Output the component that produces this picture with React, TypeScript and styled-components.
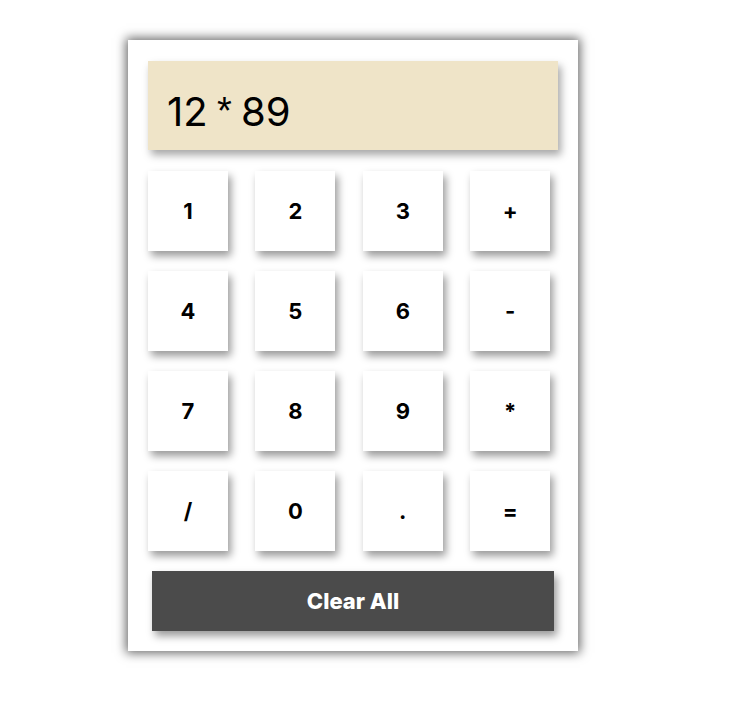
import React from "react";
import styled, { createGlobalStyle } from "styled-components";

const Global = createGlobalStyle`
  html, body { margin: 0; padding: 0; background: #ffffff; }
  body { font-family: Inter, "Noto Sans", sans-serif; }
`;

const Page = styled.div`
  padding: 40px 0 51px 128px;
  min-height: 702px;
  box-sizing: border-box;
`;

const Card = styled.div`
  width: 450px;
  box-sizing: border-box;
  padding: 21px 20px 20px 20px;
  background: #ffffff;
  box-shadow: 0 0 10px 2px rgba(0, 0, 0, 0.6);
  display: flex;
  flex-direction: column;
  height: 611px;
`;

const Display = styled.div`
  height: 89px;
  background: #efe4c8;
  box-shadow: 3px 5px 8px rgba(0, 0, 0, 0.35);
  display: flex;
  align-items: center;
  padding: 12px 0 0 19px;
  font-size: 40px;
  font-weight: 400;
  color: #000;
  box-sizing: border-box;
  white-space: pre;
  word-spacing: -2px;
`;

const Op = styled.span`
  font-family: "Liberation Sans", Arial, sans-serif;
  font-size: 38px;
`;

const Keys = styled.div`
  margin-top: 21px;
  display: grid;
  grid-template-columns: repeat(4, 80px);
  grid-auto-rows: 80px;
  column-gap: 27.4px;
  row-gap: 20px;
`;

const Key = styled.button`
  border: none;
  background: #ffffff;
  box-shadow: 3px 5px 8px rgba(0, 0, 0, 0.4);
  font-family: Inter, sans-serif;
  font-size: 22px;
  font-weight: 700;
  color: #000;
  display: flex;
  align-items: center;
  justify-content: center;
  padding: 0;
  cursor: pointer;
`;

const ClearButton = styled.button`
  margin: 20px 4px 0 4px;
  height: 60px;
  border: none;
  background: #4b4b4b;
  color: #ffffff;
  font-family: Inter, sans-serif;
  font-size: 22px;
  font-weight: 800;
  box-shadow: 3px 5px 8px rgba(0, 0, 0, 0.4);
  cursor: pointer;
`;

const keys = ["1", "2", "3", "+", "4", "5", "6", "-", "7", "8", "9", "*", "/", "0", ".", "="];

export default function App() {
  return (
    <>
      <Global />
      <Page>
        <Card>
          <Display>
            12 <Op>*</Op> 89
          </Display>
          <Keys>
            {keys.map((k) => (
              <Key key={k}>{k}</Key>
            ))}
          </Keys>
          <ClearButton>Clear All</ClearButton>
        </Card>
      </Page>
    </>
  );
}
